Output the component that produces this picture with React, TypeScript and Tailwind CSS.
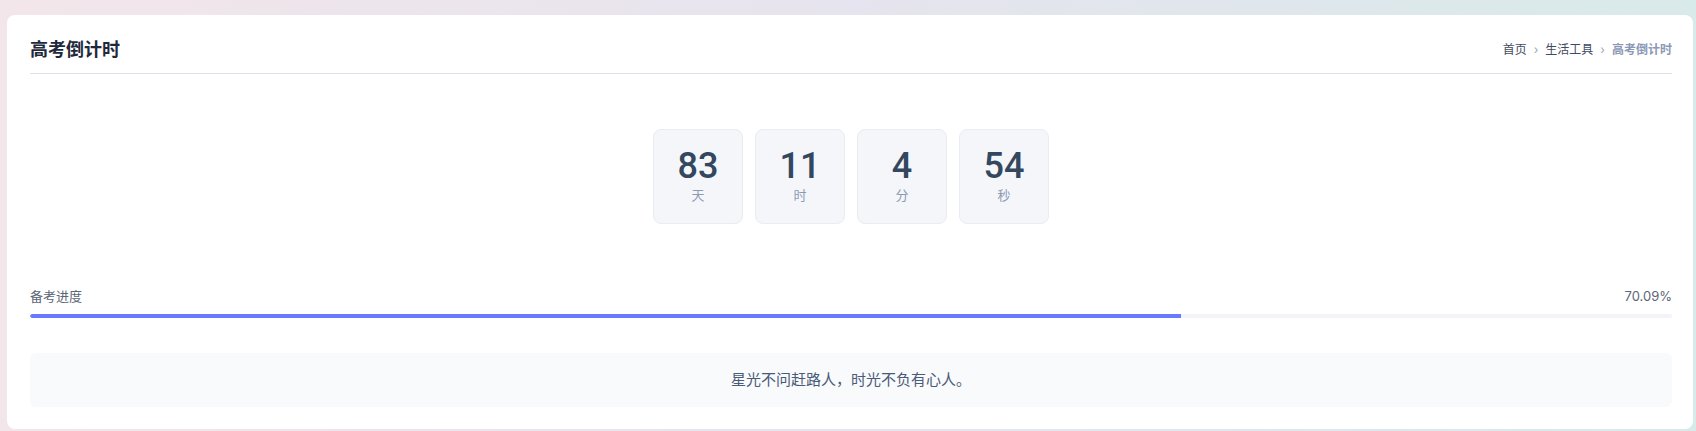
import { useMemo } from "react";

const UNITS = [
  { value: 83, label: "天" },
  { value: 11, label: "时" },
  { value: 4, label: "分" },
  { value: 54, label: "秒" },
];

const PROGRESS = 70.09;

function Breadcrumb() {
  return (
    <nav className="flex items-center gap-[7px] text-[12px] leading-[18px]">
      <span className="text-[#3f4b5e]">首页</span>
      <span className="text-[#9aa6ba]">›</span>
      <span className="text-[#3f4b5e]">生活工具</span>
      <span className="text-[#9aa6ba]">›</span>
      <span className="font-semibold text-[#8a99b5]">高考倒计时</span>
    </nav>
  );
}

function TimeBox({ value, label }: { value: number; label: string }) {
  return (
    <div className="flex h-[95px] w-[90px] flex-col items-center justify-center rounded-[8px] border border-[#e8ecf3] bg-[#f4f6fa] pb-[4px]">
      <span className="font-['Roboto'] text-[36px] font-medium leading-[40px] text-[#33475f]">
        {value}
      </span>
      <span className="text-[13px] leading-[18px] text-[#8c9ab3]">{label}</span>
    </div>
  );
}

export default function App() {
  const fillStyle = useMemo(() => ({ width: `${PROGRESS}%` }), []);

  return (
    <div className="min-h-[431px] bg-gradient-to-r from-[#f2e6ea] via-[#e6e4ee] to-[#d9eaea] pl-[7px] pr-[3px] pt-[15px] font-['Inter','Noto_Sans_CJK_SC',sans-serif]">
      <div className="rounded-[8px] bg-white pb-[22px] pl-[23px] pr-[21px] pt-[21px]">
        <header className="flex items-center justify-between border-b border-[#dfe1ea] pb-[10px]">
          <h1 className="text-[18px] font-bold leading-[27px] text-[#1e293b]">
            高考倒计时
          </h1>
          <Breadcrumb />
        </header>

        <div className="mt-[55px] flex justify-center gap-[12px]">
          {UNITS.map((unit) => (
            <TimeBox key={unit.label} value={unit.value} label={unit.label} />
          ))}
        </div>

        <div className="mt-[62px]">
          <div className="flex items-center justify-between text-[13px] leading-[20px] text-[#5b6578]">
            <span>备考进度</span>
            <span>{PROGRESS.toFixed(2)}%</span>
          </div>
          <div className="mt-[8px] h-[4px] w-full overflow-hidden rounded-full bg-[#f3f4fa]">
            <div className="h-full rounded-l-full bg-[#687bff]" style={fillStyle} />
          </div>
        </div>

        <div className="mt-[35px] flex h-[54px] items-center justify-center rounded-[6px] bg-[#f8fafc] text-[15px] text-[#4b5a78]">
          星光不问赶路人，时光不负有心人。
        </div>
      </div>
    </div>
  );
}
